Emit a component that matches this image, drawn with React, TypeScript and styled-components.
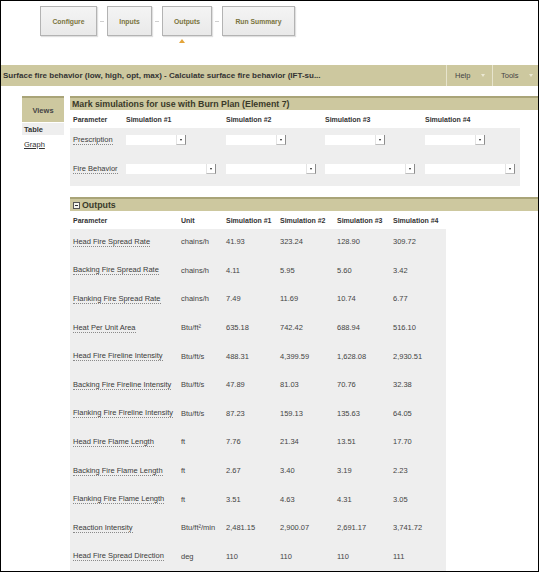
import React from "react";
import styled, { createGlobalStyle } from "styled-components";

const Global = createGlobalStyle`
  html, body { margin: 0; padding: 0; background: #fff; }
  body { font-family: "Liberation Sans", Arial, sans-serif; color: #333; }
  * { box-sizing: border-box; }
`;

const KHAKI = "#cdc89f";
const KHAKI_DARK = "#a9a478";
const GREY = "#eeeeee";

const Frame = styled.div`
  width: 539px;
  height: 572px;
  border: 1px solid #000;
  overflow: hidden;
  background: #fff;
`;

const StepNav = styled.nav`
  display: flex;
  align-items: center;
  padding: 5px 0 0 39px;
  height: 35px;
`;

const StepItem = styled.div`
  position: relative;
`;

const StepButton = styled.div<{ $w: number }>`
  width: ${(p) => p.$w}px;
  height: 30px;
  display: flex;
  align-items: center;
  justify-content: center;
  background: linear-gradient(#f4f4f4, #e9e9e9);
  border: 1px solid #b3b3b3;
  box-shadow: 1px 1px 1px rgba(0, 0, 0, 0.12);
  color: #7a7440;
  font-weight: bold;
  font-size: 6.8px;
`;

const ActiveMark = styled.span`
  position: absolute;
  left: 50%;
  top: 33px;
  margin-left: -8px;
  width: 0;
  height: 0;
  border-left: 3.5px solid transparent;
  border-right: 3.5px solid transparent;
  border-bottom: 4px solid #e3a43a;
`;

const Connector = styled.span`
  width: 4px;
  height: 1px;
  margin: 0 3px;
  background: #cfcfcf;
`;

const TitleBar = styled.div`
  margin-top: 29px;
  height: 21px;
  background: ${KHAKI};
  display: flex;
  align-items: center;
`;

const Title = styled.div`
  flex: 1;
  padding-left: 2px;
  font-weight: bold;
  font-size: 8px;
  color: #333;
  white-space: nowrap;
  overflow: hidden;
`;

const MenuButton = styled.div`
  width: 46px;
  flex: none;
  height: 21px;
  border-left: 1px solid #e7e4cd;
  display: flex;
  align-items: center;
  padding-left: 8px;
  font-size: 7.5px;
  color: #444;
`;

const MenuLabel = styled.span<{ $w: number }>`
  width: ${(p) => p.$w}px;
`;

const Caret = styled.span`
  width: 0;
  height: 0;
  border-left: 2.5px solid transparent;
  border-right: 2.5px solid transparent;
  border-top: 3px solid #ebe8d3;
`;

const Body = styled.div`
  display: flex;
  padding-left: 21px;
  margin-top: 10px;
  gap: 6px;
`;

const Sidebar = styled.aside`
  width: 42px;
  flex: none;
`;

const ViewsHead = styled.div`
  height: 26px;
  background: ${KHAKI};
  border-top: 2px solid ${KHAKI_DARK};
  display: flex;
  align-items: center;
  justify-content: center;
  font-weight: bold;
  font-size: 7.5px;
  color: #444;
`;

const ViewItem = styled.div<{ $active?: boolean }>`
  height: 12px;
  padding-left: 2px;
  display: flex;
  align-items: center;
  background: ${(p) => (p.$active ? GREY : "transparent")};
  font-size: 7.5px;
  font-weight: ${(p) => (p.$active ? "bold" : "normal")};
  color: #333;
  text-decoration: ${(p) => (p.$active ? "none" : "underline")};
  margin-top: ${(p) => (p.$active ? "1px" : "3px")};
`;

const Main = styled.main`
  flex: 1;
  min-width: 0;
`;

const SectionHeader = styled.div<{ $mt?: number }>`
  height: 14px;
  margin-top: ${(p) => p.$mt ?? 0}px;
  background: ${KHAKI};
  border-top: 2px solid ${KHAKI_DARK};
  display: flex;
  align-items: center;
  gap: 2px;
  padding-left: 2px;
  font-weight: bold;
  font-size: 8.8px;
  color: #3a3a2a;
`;

const Toggle = styled.span`
  width: 7px;
  height: 7px;
  border: 1px solid #555;
  background: #f6f6f0;
  display: flex;
  align-items: center;
  justify-content: center;
  margin-left: 1px;
  &::before {
    content: "";
    width: 3px;
    height: 1px;
    background: #333;
  }
`;

const MarkGrid = styled.div`
  display: grid;
  grid-template-columns: 56px 100px 99px 100px 95px;
  width: 450px;
`;

const HeadCell = styled.div<{ $pl?: number }>`
  height: 18px;
  display: flex;
  align-items: center;
  padding-left: ${(p) => p.$pl ?? 0}px;
  font-weight: bold;
  font-size: 7px;
  color: #333;
  white-space: nowrap;
`;

const MarkCell = styled.div<{ $pl?: number }>`
  height: 29px;
  background: ${GREY};
  display: flex;
  align-items: center;
  padding-left: ${(p) => p.$pl ?? 0}px;
  padding-bottom: 5px;
  font-size: 7.5px;
`;

const LinkText = styled.span`
  color: #3a3a3a;
  border-bottom: 1px dotted #8a8a8a;
  white-space: nowrap;
  line-height: 9px;
`;

const SelectBox = styled.div<{ $w: number }>`
  width: ${(p) => p.$w}px;
  height: 10px;
  display: flex;
  justify-content: flex-end;
  background: #fff;
`;

const SelectArrow = styled.span`
  width: 10px;
  height: 10px;
  border-right: 1px solid #8d8d8d;
  border-bottom: 1px solid #bdbdbd;
  border-left: 1px solid #e4e4e4;
  display: flex;
  align-items: center;
  justify-content: center;
  &::before {
    content: "";
    width: 0;
    height: 0;
    border-left: 1.5px solid transparent;
    border-right: 1.5px solid transparent;
    border-top: 2px solid #222;
  }
`;

const OutGrid = styled.div`
  display: grid;
  grid-template-columns: 108px 45px 54px 57px 56px 56px;
  width: 376px;
`;

const OutHead = styled.div`
  height: 18px;
  display: flex;
  align-items: center;
  padding-left: 3px;
  font-weight: bold;
  font-size: 7px;
  color: #333;
  white-space: nowrap;
`;

const OutCell = styled.div`
  height: 28.6px;
  background: ${GREY};
  display: flex;
  align-items: center;
  padding-left: 3px;
  padding-bottom: 3px;
  font-size: 7.5px;
  color: #444;
  white-space: nowrap;
`;

const steps = [
  { label: "Configure", w: 57 },
  { label: "Inputs", w: 45 },
  { label: "Outputs", w: 50, active: true },
  { label: "Run Summary", w: 73 },
];

const sims = ["Simulation #1", "Simulation #2", "Simulation #3", "Simulation #4"];

const markRows = [
  { label: "Prescription", w: 60 },
  { label: "Fire Behavior", w: 90 },
];

const outputs: [string, string, string, string, string, string][] = [
  ["Head Fire Spread Rate", "chains/h", "41.93", "323.24", "128.90", "309.72"],
  ["Backing Fire Spread Rate", "chains/h", "4.11", "5.95", "5.60", "3.42"],
  ["Flanking Fire Spread Rate", "chains/h", "7.49", "11.69", "10.74", "6.77"],
  ["Heat Per Unit Area", "Btu/ft²", "635.18", "742.42", "688.94", "516.10"],
  ["Head Fire Fireline Intensity", "Btu/ft/s", "488.31", "4,399.59", "1,628.08", "2,930.51"],
  ["Backing Fire Fireline Intensity", "Btu/ft/s", "47.89", "81.03", "70.76", "32.38"],
  ["Flanking Fire Fireline Intensity", "Btu/ft/s", "87.23", "159.13", "135.63", "64.05"],
  ["Head Fire Flame Length", "ft", "7.76", "21.34", "13.51", "17.70"],
  ["Backing Fire Flame Length", "ft", "2.67", "3.40", "3.19", "2.23"],
  ["Flanking Fire Flame Length", "ft", "3.51", "4.63", "4.31", "3.05"],
  ["Reaction Intensity", "Btu/ft²/min", "2,481.15", "2,900.07", "2,691.17", "3,741.72"],
  ["Head Fire Spread Direction", "deg", "110", "110", "110", "111"],
];

export default function App() {
  return (
    <Frame>
      <Global />
      <StepNav>
        {steps.map((s, i) => (
          <React.Fragment key={s.label}>
            {i > 0 && <Connector />}
            <StepItem>
              <StepButton $w={s.w}>{s.label}</StepButton>
              {s.active && <ActiveMark />}
            </StepItem>
          </React.Fragment>
        ))}
      </StepNav>

      <TitleBar>
        <Title>
          Surface fire behavior (low, high, opt, max) - Calculate surface fire behavior (IFT-su...
        </Title>
        <MenuButton>
          <MenuLabel $w={26}>Help</MenuLabel>
          <Caret />
        </MenuButton>
        <MenuButton>
          <MenuLabel $w={28}>Tools</MenuLabel>
          <Caret />
        </MenuButton>
      </TitleBar>

      <Body>
        <Sidebar>
          <ViewsHead>Views</ViewsHead>
          <ViewItem $active>Table</ViewItem>
          <ViewItem>Graph</ViewItem>
        </Sidebar>
        <Main>
          <SectionHeader>Mark simulations for use with Burn Plan (Element 7)</SectionHeader>
          <MarkGrid>
            <HeadCell $pl={3}>Parameter</HeadCell>
            {sims.map((s) => (
              <HeadCell key={s}>{s}</HeadCell>
            ))}
            {markRows.map((r) => (
              <React.Fragment key={r.label}>
                <MarkCell $pl={3}>
                  <LinkText>{r.label}</LinkText>
                </MarkCell>
                {sims.map((s) => (
                  <MarkCell key={s}>
                    <SelectBox $w={r.w}>
                      <SelectArrow />
                    </SelectBox>
                  </MarkCell>
                ))}
              </React.Fragment>
            ))}
          </MarkGrid>

          <SectionHeader $mt={11}>
            <Toggle />
            Outputs
          </SectionHeader>
          <OutGrid>
            <OutHead>Parameter</OutHead>
            <OutHead>Unit</OutHead>
            {sims.map((s) => (
              <OutHead key={s}>{s}</OutHead>
            ))}
            {outputs.map((row) => (
              <React.Fragment key={row[0]}>
                <OutCell>
                  <LinkText>{row[0]}</LinkText>
                </OutCell>
                {row.slice(1).map((v, i) => (
                  <OutCell key={i}>{v}</OutCell>
                ))}
              </React.Fragment>
            ))}
          </OutGrid>
        </Main>
      </Body>
    </Frame>
  );
}
